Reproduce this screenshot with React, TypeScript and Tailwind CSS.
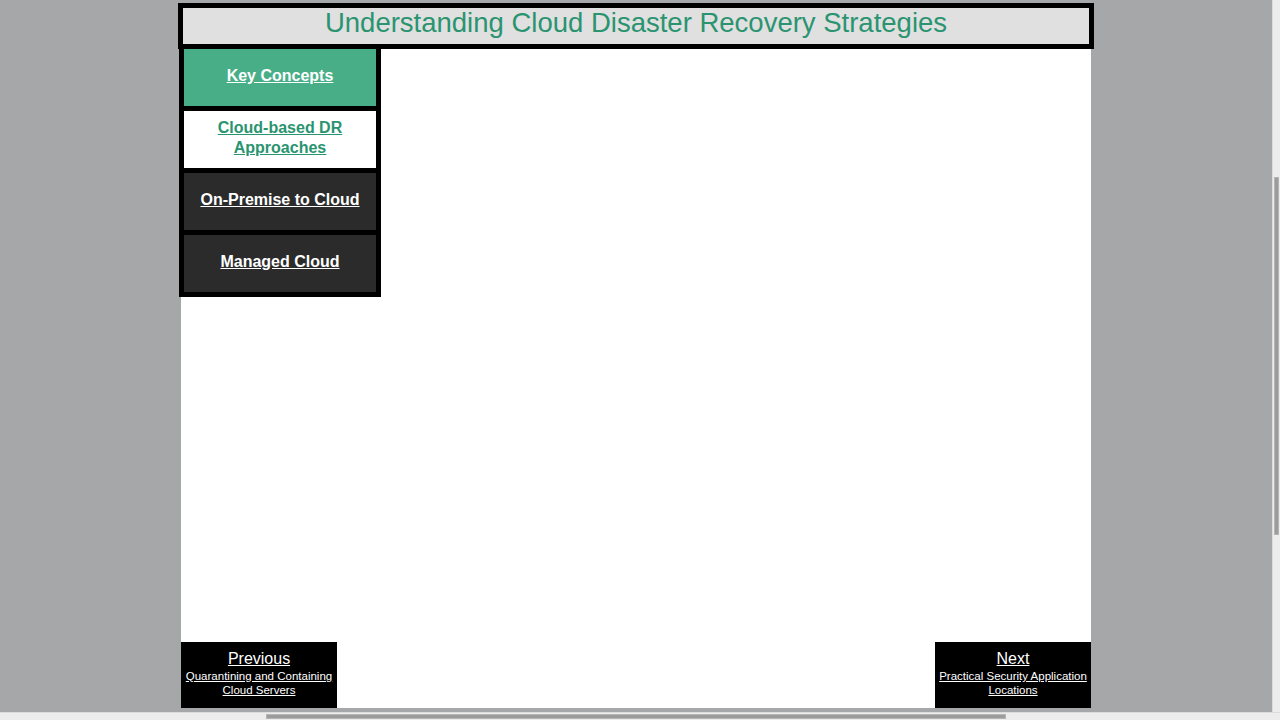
import { ReactNode } from 'react'

const NAV_ITEMS = [
  { label: 'Key Concepts', tone: 'bg-[#48ae88] text-white' },
  { label: 'Cloud-based DR Approaches', tone: 'bg-white text-[#2a9470]' },
  { label: 'On-Premise to Cloud', tone: 'bg-[#2b2b2b] text-white' },
  { label: 'Managed Cloud', tone: 'bg-[#2b2b2b] text-white' },
]

function PageLink({ title, sub }: { title: string; sub: ReactNode }) {
  return (
    <a
      href="#"
      className="w-[156px] h-[66px] bg-black text-white flex flex-col items-center pt-[8px] text-center"
    >
      <span className="text-[16px] leading-[18px] underline">{title}</span>
      <span className="text-[11.5px] leading-[14px] underline mt-[1px] px-1">{sub}</span>
    </a>
  )
}

export default function App() {
  return (
    <div
      className="w-[1280px] h-[720px] flex flex-col overflow-hidden bg-[#a6a7a9]"
      style={{ fontFamily: '"Liberation Sans", Arial, sans-serif' }}
    >
      <div className="flex flex-1 min-h-0">
        {/* Page */}
        <div className="flex-1 flex justify-center pt-[3px]">
          <div className="w-[910px] h-[705px] bg-white flex flex-col">
            {/* Header */}
            <div className="-mx-[3px] h-[46px] border-[5px] border-black bg-[#e0e0e0] flex items-start justify-center">
              <h1 className="text-[27.5px] leading-[30px] text-[#2a9470]">
                Understanding Cloud Disaster Recovery Strategies
              </h1>
            </div>

            {/* Body */}
            <div className="flex-1 flex flex-col">
              <nav className="-ml-[2px] w-[202px] bg-black px-[5px] pb-[5px] flex flex-col gap-[5px]">
                {NAV_ITEMS.map(item => (
                  <a
                    key={item.label}
                    href="#"
                    className={`h-[57px] flex items-center justify-center text-center px-8 pb-[3px] text-[16px] leading-[20px] font-bold underline ${item.tone}`}
                  >
                    {item.label === 'On-Premise to Cloud' ? (
                      <span className="whitespace-nowrap">{item.label}</span>
                    ) : (
                      item.label
                    )}
                  </a>
                ))}
              </nav>

              <div className="flex-1" />

              {/* Footer */}
              <div className="flex justify-between">
                <PageLink title="Previous" sub="Quarantining and Containing Cloud Servers" />
                <PageLink title="Next" sub="Practical Security Application Locations" />
              </div>
            </div>
          </div>
        </div>

        {/* Vertical scrollbar */}
        <div className="w-[8px] bg-[#ececec] border-l border-[#dcdcdc]">
          <div className="mt-[177px] h-[358px] mx-[1px] bg-[#9b9b9b] border border-[#b5b5b5]" />
        </div>
      </div>

      {/* Horizontal scrollbar */}
      <div className="h-[8px] bg-[#ececec] border-t border-[#dcdcdc] flex">
        <div className="ml-[266px] w-[740px] h-[5px] mt-[1px] bg-[#9b9b9b] border border-[#b5b5b5]" />
      </div>
    </div>
  )
}
